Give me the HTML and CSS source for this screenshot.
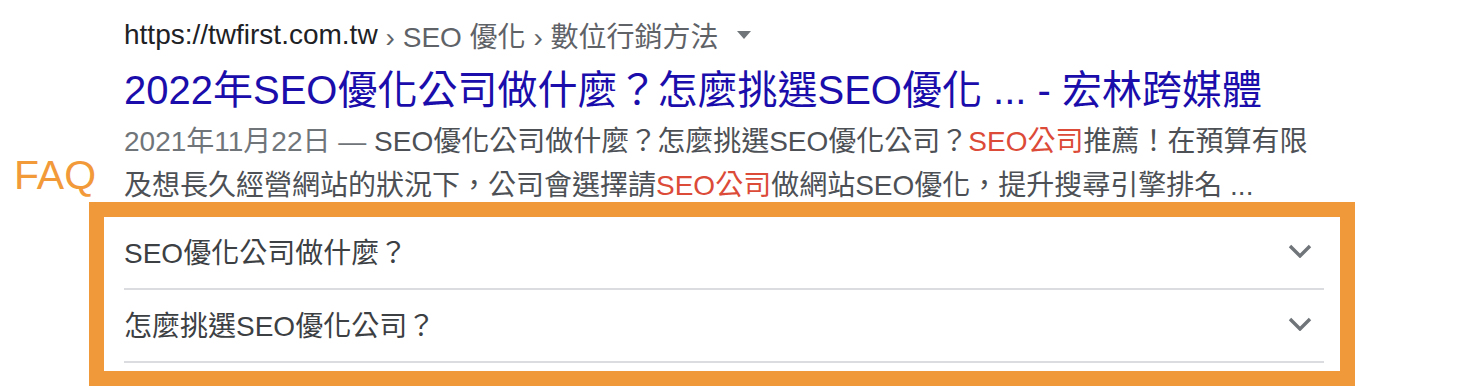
FILE: index.html
```html
<!DOCTYPE html>
<html lang="zh-Hant">
<head>
    <meta charset="UTF-8">
    <meta name="viewport" content="width=device-width, initial-scale=1.0">
    <title>SEO 優化 搜尋結果</title>
    <link rel="stylesheet" href="styles.css">
</head>
<body>
    <div class="page">
        <!-- 標註文字 -->
        <div class="faq-label">FAQ</div>

        <div class="result">
            <div class="cite">
                <span class="cite-host">https://twfirst.com.tw</span>
                <span class="cite-path">› SEO 優化 › 數位行銷方法</span>
                <svg class="cite-arrow" width="14" height="8" viewBox="0 0 14 8"><polygon points="0,0 14,0 7,8" fill="#70757a"/></svg>
            </div>
            <a class="title" href="#">2022年SEO優化公司做什麼？怎麼挑選SEO優化 ... - 宏林跨媒體</a>
            <div class="snippet">
                <span class="date">2021年11月22日 — </span>SEO優化公司做什麼？怎麼挑選SEO優化公司？<em>SEO公司</em>推薦！在預算有限及想長久經營網站的狀況下，公司會選擇請<em>SEO公司</em>做網站SEO優化，提升搜尋引擎排名 ...
            </div>
        </div>

        <!-- 常見問題 (橘色框) -->
        <div class="faq-box">
            <div class="faq-row">
                <span>SEO優化公司做什麼？</span>
                <svg class="chevron" width="24" height="14" viewBox="0 0 24 14"><polyline points="2,2 12,12 22,2" fill="none" stroke="#70757a" stroke-width="3.4"/></svg>
            </div>
            <div class="faq-row">
                <span>怎麼挑選SEO優化公司？</span>
                <svg class="chevron" width="24" height="14" viewBox="0 0 24 14"><polyline points="2,2 12,12 22,2" fill="none" stroke="#70757a" stroke-width="3.4"/></svg>
            </div>
        </div>
    </div>
</body>
</html>
```

FILE: styles.css
```css
body {
    margin: 0;
    padding: 0;
    background: #ffffff;
    font-family: "Liberation Sans", "Noto Sans CJK TC", sans-serif;
}

.page {
    position: relative;
    width: 1466px;
    height: 390px;
    overflow: hidden;
}

.faq-label {
    position: absolute;
    left: 14px;
    top: 151px;
    font-size: 41px;
    line-height: 48px;
    color: #f29a3a;
}

.result {
    padding: 15px 0 0 124px;
    width: 1200px;
}

.cite {
    display: flex;
    align-items: center;
    height: 40px;
    font-size: 28px;
    white-space: nowrap;
}

.cite-host {
    color: #202124;
}

.cite-path {
    color: #5f6368;
    margin-left: 8px;
}

.cite-arrow {
    margin-left: 18px;
}

.title {
    display: block;
    margin-top: 9px;
    font-size: 40px;
    line-height: 52px;
    color: #1a0dab;
    text-decoration: none;
    white-space: nowrap;
}

.snippet {
    margin-top: 4px;
    font-size: 28px;
    line-height: 44px;
    color: #4d5156;
}

.date {
    color: #70757a;
}

.snippet em {
    font-style: normal;
    color: #dc4a38;
}

.faq-box {
    margin: -6px 0 0 89px;
    width: 1266px;
    box-sizing: border-box;
    border: 15px solid #f0993a;
    padding: 0 16px 8px 20px;
    background: #ffffff;
}

.faq-row {
    display: flex;
    align-items: center;
    justify-content: space-between;
    box-sizing: content-box;
    height: 67px;
    padding-bottom: 4px;
    border-bottom: 2px solid #dadce0;
    font-size: 28px;
    color: #3c4043;
}

.chevron {
    margin-right: 12px;
}
```
